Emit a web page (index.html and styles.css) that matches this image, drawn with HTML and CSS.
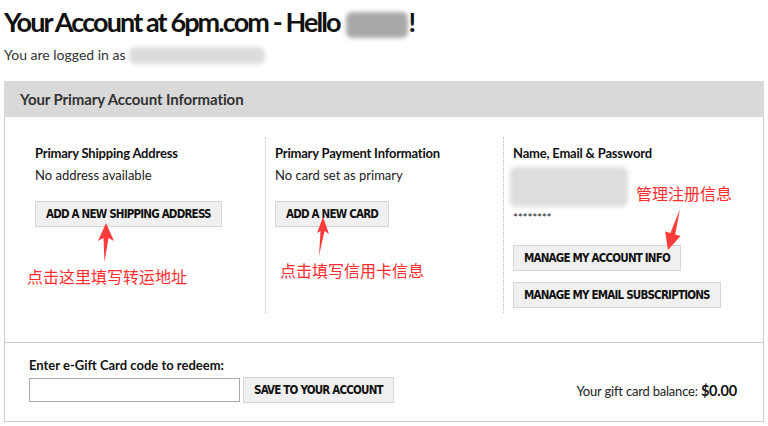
FILE: index.html
```html
<!DOCTYPE html>
<html lang="en">
<head>
  <meta charset="UTF-8" />
  <title>Your Account at 6pm.com</title>
  <link rel="stylesheet" href="styles.css">
</head>
<body>
  <div class="page">
    <h1 class="title">Your Account at 6pm.com - Hello <span class="blur blur-name"></span>!</h1>
    <p class="logged">You are logged in as <span class="blur blur-login"></span></p>

    <div class="panel">
      <div class="panel-head">Your Primary Account Information</div>
      <div class="panel-body">
        <div class="col">
          <h3>Primary Shipping Address</h3>
          <p>No address available</p>
          <button class="btn">ADD A NEW SHIPPING ADDRESS</button>
        </div>
        <div class="col col-split">
          <h3>Primary Payment Information</h3>
          <p>No card set as primary</p>
          <button class="btn">ADD A NEW CARD</button>
        </div>
        <div class="col col-split">
          <h3>Name, Email &amp; Password</h3>
          <div class="blur blur-info"></div>
          <p class="stars">********</p>
          <div class="btn-stack">
            <button class="btn">MANAGE MY ACCOUNT INFO</button>
            <button class="btn">MANAGE MY EMAIL SUBSCRIPTIONS</button>
          </div>
        </div>
      </div>
      <div class="gift">
        <div class="gift-form">
          <label for="giftcode">Enter e-Gift Card code to redeem:</label>
          <div class="gift-row">
            <input type="text" id="giftcode" />
            <button class="btn">SAVE TO YOUR ACCOUNT</button>
          </div>
        </div>
        <div class="balance">Your gift card balance: <strong>$0.00</strong></div>
      </div>
    </div>

    <!-- annotations -->
    <span class="note note-ship">点击这里填写转运地址</span>
    <span class="note note-card">点击填写信用卡信息</span>
    <span class="note note-acct">管理注册信息</span>
    <svg class="arrows" width="768" height="426" viewBox="0 0 768 426">
      <polygon points="106,223 114,241 108.5,238 104.5,262 103.5,238 98,241" />
      <polygon points="323,217 329,234 324.5,231 319,256 320.5,231 317,233" />
      <polygon points="668,250 680.5,236 675.2,234.4 680,209 670.4,233 665.1,231.5" />
    </svg>
  </div>
</body>
</html>
```

FILE: styles.css
```css
* {
  box-sizing: border-box;
}
body {
  margin: 0;
  background: #fff;
  font-family: Lato, 'Open Sans', sans-serif;
  color: #222;
}
.page {
  position: relative;
  width: 768px;
  height: 426px;
  padding: 0 4px;
  overflow: hidden;
}
.title {
  margin: 0;
  padding-top: 5px;
  font-size: 27px;
  line-height: 34px;
  font-weight: 700;
  letter-spacing: -1.9px;
  color: #111;
}
.logged {
  margin: 7px 0 0;
  font-size: 14px;
  line-height: 18px;
  color: #333;
}
.blur {
  display: inline-block;
  background: #c8c8c8;
  filter: blur(2px);
  border-radius: 6px;
}
.blur-name {
  width: 62px;
  height: 26px;
  margin-left: 2px;
  vertical-align: -6px;
  background: #a9a9a9;
}
.blur-login {
  width: 136px;
  height: 17px;
  vertical-align: -4px;
  background: #dcdcdc;
}
.blur-info {
  display: block;
  width: 118px;
  height: 40px;
  margin: 6px 0 0 -3px;
  background: #dddddd;
}

.panel {
  margin-top: 17px;
}
.panel-head {
  background: #d9d9d9;
  height: 36px;
  padding: 0 16px;
  font-size: 15px;
  line-height: 36px;
  font-weight: 700;
  color: #333;
  letter-spacing: -0.1px;
}
.panel-body {
  display: grid;
  grid-template-columns: 230px 238px 1fr;
  padding: 20px 0 29px 30px;
  border: 1px solid #ccc;
  border-top: none;
}
.col {
  padding: 8px 0 5px;
}
.col-split {
  border-left: 1px dotted #bbb;
  padding-left: 9px;
}
.col h3 {
  margin: 0 0 5px;
  font-size: 13px;
  line-height: 16px;
  font-weight: 700;
  color: #111;
  letter-spacing: -0.2px;
}
.col p {
  margin: 0;
  font-size: 13px;
  line-height: 18px;
  color: #222;
}
.col .stars {
  font-size: 12px;
  line-height: 14px;
  margin-top: 4px;
  letter-spacing: -0.3px;
}
.btn {
  display: inline-block;
  margin-top: 17px;
  padding: 0 10px;
  height: 26px;
  background: #f0f0f0;
  border: 1px solid #d6d6d6;
  font-family: 'DejaVu Sans Condensed', 'DejaVu Sans', sans-serif;
  font-weight: 700;
  font-size: 11.5px;
  letter-spacing: -0.8px;
  color: #111;
  cursor: pointer;
}
.btn-stack {
  display: flex;
  flex-direction: column;
  align-items: flex-start;
  gap: 11px;
  margin-top: 20px;
}
.btn-stack .btn {
  margin-top: 0;
}

.gift {
  display: flex;
  justify-content: space-between;
  align-items: flex-end;
  padding: 14px 26px 18px 24px;
  border: 1px solid #ccc;
  border-top: none;
}
.gift label {
  display: block;
  font-size: 13px;
  line-height: 16px;
  font-weight: 700;
  color: #111;
}
.gift-row {
  display: flex;
  align-items: center;
  gap: 3px;
  margin-top: 4px;
}
.gift-row input {
  width: 211px;
  height: 24px;
  border: 1px solid #aaa;
  margin: 0;
}
.gift-row .btn {
  margin-top: 0;
  height: 26px;
}
.balance {
  font-size: 13px;
  line-height: 18px;
  margin-bottom: 3px;
  color: #222;
  letter-spacing: -0.2px;
}
.balance strong {
  font-size: 14.5px;
  color: #111;
}

.note {
  position: absolute;
  font-family: 'Noto Sans CJK SC', sans-serif;
  font-size: 16px;
  line-height: 20px;
  color: #ff2d2d;
  white-space: nowrap;
}
.note-ship {
  left: 27px;
  top: 266px;
}
.note-card {
  left: 280px;
  top: 260px;
}
.note-acct {
  left: 636px;
  top: 183px;
}
.arrows {
  position: absolute;
  left: 0;
  top: 0;
  pointer-events: none;
}
.arrows polygon {
  fill: #ff3b3b;
}
```
